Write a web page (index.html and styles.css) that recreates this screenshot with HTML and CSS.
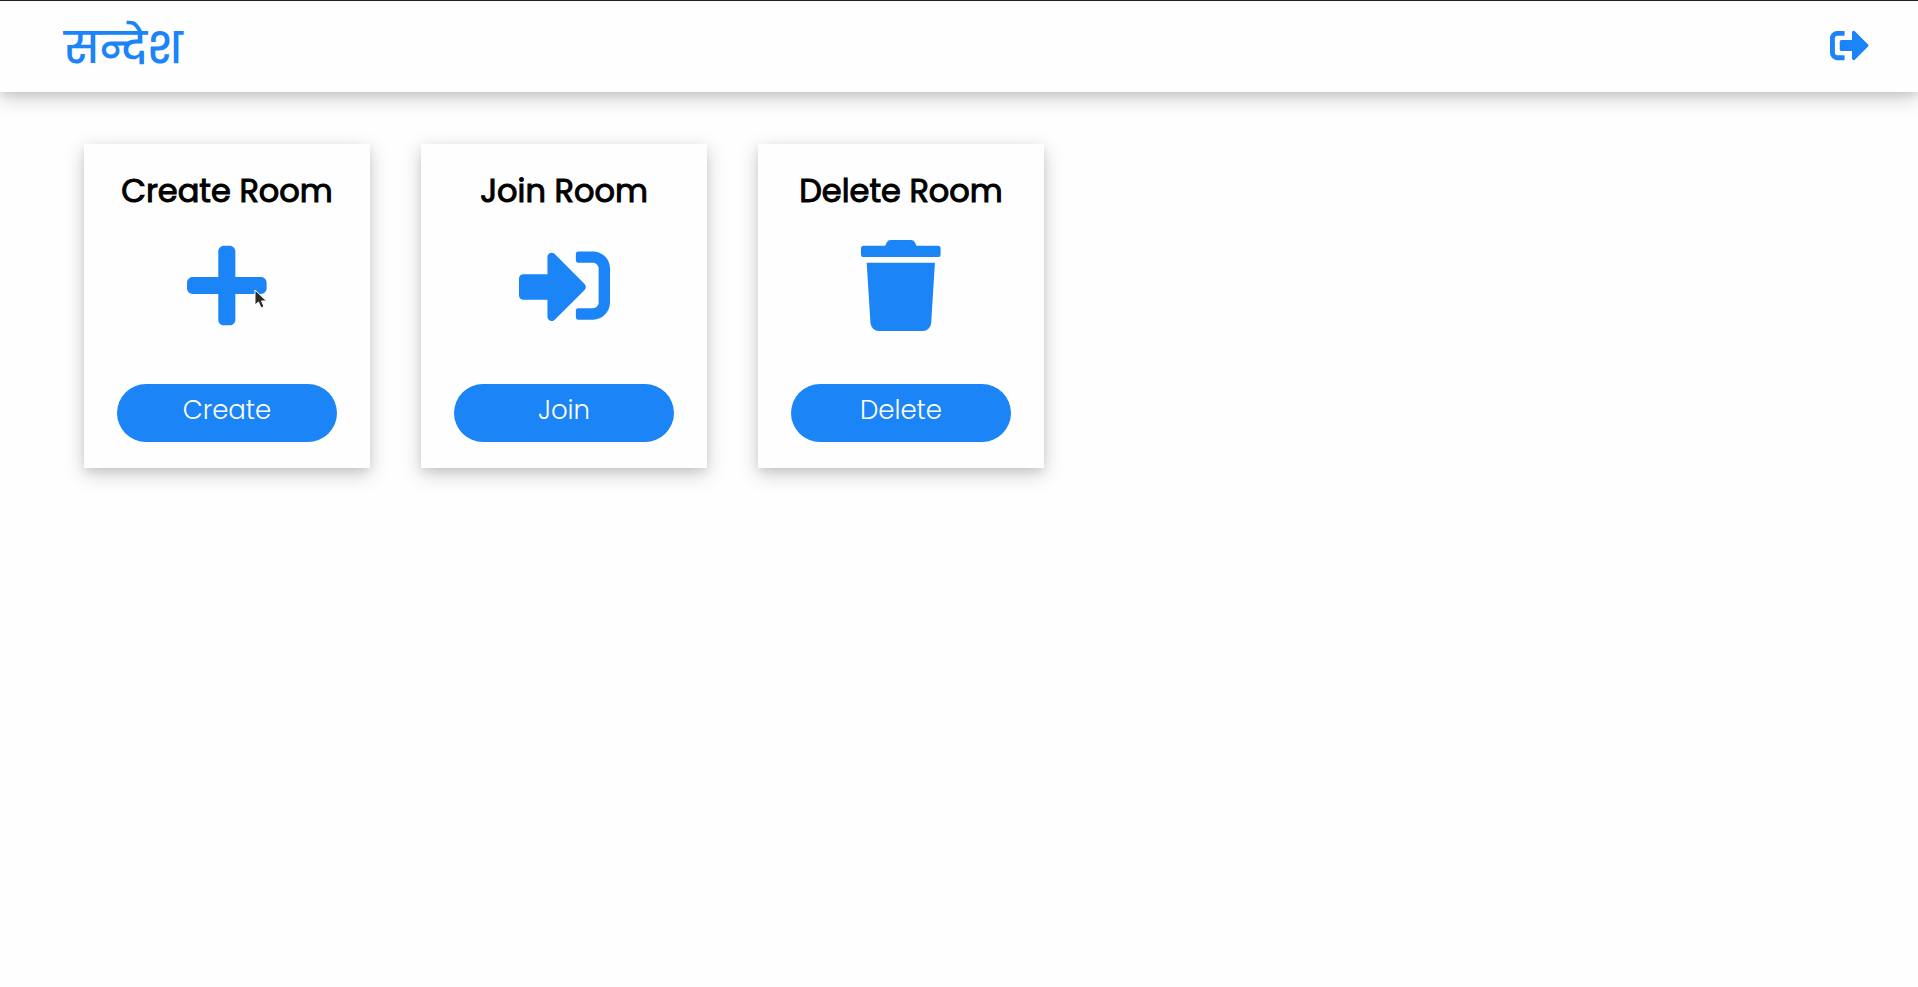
FILE: index.html
```html
<!DOCTYPE html>
<html lang="en">
<head>
<meta charset="utf-8">
<meta name="viewport" content="width=device-width, initial-scale=1">
<title>सन्देश</title>
<link rel="stylesheet" href="styles.css">
</head>
<body>
<header class="navbar">
  <a class="brand" href="#" lang="hi">सन्देश</a>
  <button class="logout" type="button" aria-label="Log out">
    <svg class="logout-icon" viewBox="0 0 512 512" aria-hidden="true"><path d="M497 273L329 441c-15 15-41 4.500-41-17v-96H152c-13.300 0-24-10.700-24-24v-96c0-13.300 10.700-24 24-24h136V88c0-21.400 25.900-32 41-17l168 168c9.300 9.400 9.300 24.600 0 34zM192 436v-40c0-6.600-5.400-12-12-12H96c-17.700 0-32-14.300-32-32V160c0-17.700 14.300-32 32-32h84c6.600 0 12-5.400 12-12V76c0-6.600-5.400-12-12-12H96c-53 0-96 43-96 96v192c0 53 43 96 96 96h84c6.600 0 12-5.400 12-12z"/></svg>
  </button>
</header>
<main class="rooms">
  <section class="card">
    <h2 class="card-title">Create Room</h2>
    <div class="card-figure">
      <svg class="card-icon" viewBox="0 0 448 512" aria-hidden="true"><path d="M416 208H272V64c0-17.670-14.330-32-32-32h-32c-17.670 0-32 14.330-32 32v144H32c-17.670 0-32 14.330-32 32v32c0 17.670 14.330 32 32 32h144v144c0 17.670 14.330 32 32 32h32c17.670 0 32-14.330 32-32V304h144c17.670 0 32-14.330 32-32v-32c0-17.670-14.330-32-32-32z"/></svg>
      <svg class="pointer" viewBox="0 0 14 21" aria-hidden="true"><path d="M1 1V16L4.500 13L7 19L10 17.500L7.500 12H12.500Z"/></svg>
    </div>
    <button class="card-button" type="button">Create</button>
  </section>
  <section class="card">
    <h2 class="card-title">Join Room</h2>
    <div class="card-figure">
      <svg class="card-icon" viewBox="0 0 512 512" aria-hidden="true"><path d="M416 448h-84c-6.600 0-12-5.400-12-12v-40c0-6.600 5.400-12 12-12h84c17.700 0 32-14.300 32-32V160c0-17.700-14.300-32-32-32h-84c-6.600 0-12-5.400-12-12V76c0-6.600 5.400-12 12-12h84c53 0 96 43 96 96v192c0 53-43 96-96 96zm-47-201L201 79c-15-15-41-4.500-41 17v96H24c-13.300 0-24 10.700-24 24v96c0 13.300 10.700 24 24 24h136v96c0 21.500 26 32 41 17l168-168c9.300-9.400 9.300-24.600 0-34z"/></svg>
    </div>
    <button class="card-button" type="button">Join</button>
  </section>
  <section class="card">
    <h2 class="card-title">Delete Room</h2>
    <div class="card-figure">
      <svg class="card-icon" viewBox="0 0 448 512" aria-hidden="true"><path d="M432 32H312l-9.400-18.700A24 24 0 0 0 281.100 0H166.800a23.720 23.720 0 0 0-21.400 13.300L136 32H16A16 16 0 0 0 0 48v32a16 16 0 0 0 16 16h416a16 16 0 0 0 16-16V48a16 16 0 0 0-16-16zM53.200 467a48 48 0 0 0 47.900 45h245.800a48 48 0 0 0 47.900-45L416 128H32z"/></svg>
    </div>
    <button class="card-button" type="button">Delete</button>
  </section>
</main>
</body>
</html>
```
FILE: styles.css
```css
:root {
  --blue: #1b84f7;
  --surface: #fefefe;
  --shadow: 0 4px 8px 0 rgba(0, 0, 0, 0.08), 0 6px 20px 0 rgba(0, 0, 0, 0.19);
}

* {
  box-sizing: border-box;
}

body {
  margin: 0;
  min-height: 100vh;
  background: var(--surface);
  font-family: Poppins, Inter, "Noto Sans", sans-serif;
}

.navbar {
  display: flex;
  align-items: center;
  justify-content: space-between;
  min-height: 92px;
  padding: 0 49px 2px 64px;
  border-top: 1px solid #231f20;
  background: var(--surface);
  box-shadow: var(--shadow);
}

.brand {
  padding-top: 4px;
  color: var(--blue);
  font-family: Poppins, "Noto Serif Devanagari", "Noto Sans Devanagari", serif;
  font-size: 43px;
  font-weight: 500;
  line-height: 56px;
  text-decoration: none;
}

.logout {
  display: flex;
  padding: 0;
  border: 0;
  background: none;
  cursor: pointer;
}

.logout-icon {
  width: 39px;
  height: 39px;
  fill: var(--blue);
}

.rooms {
  display: flex;
  flex-wrap: wrap;
  gap: 51px;
  padding: 52px 84px;
}

.card {
  display: flex;
  flex-direction: column;
  flex: 0 0 286px;
  padding: 22px 33px 26px;
  background: var(--surface);
  box-shadow: var(--shadow);
}

.card-title {
  margin: 0 -20px 24px;
  color: #000;
  font-size: 32px;
  font-weight: 400;
  line-height: 50px;
  text-align: center;
  white-space: nowrap;
  -webkit-text-stroke: 1px #000;
}

.card-figure {
  position: relative;
  display: flex;
  justify-content: center;
  margin-bottom: 53px;
}

.card-icon {
  height: 91px;
  fill: var(--blue);
}

.pointer {
  position: absolute;
  top: 49px;
  left: 137px;
  width: 14px;
  height: 21px;
  fill: #2b2b2b;
  stroke: #fff;
  stroke-width: 1;
}

.card-button {
  height: 58px;
  padding: 0 16px 6px;
  border: 0;
  border-radius: 29px;
  background: var(--blue);
  color: #fff;
  font-family: inherit;
  font-size: 26px;
  font-weight: 300;
  cursor: pointer;
}
```
